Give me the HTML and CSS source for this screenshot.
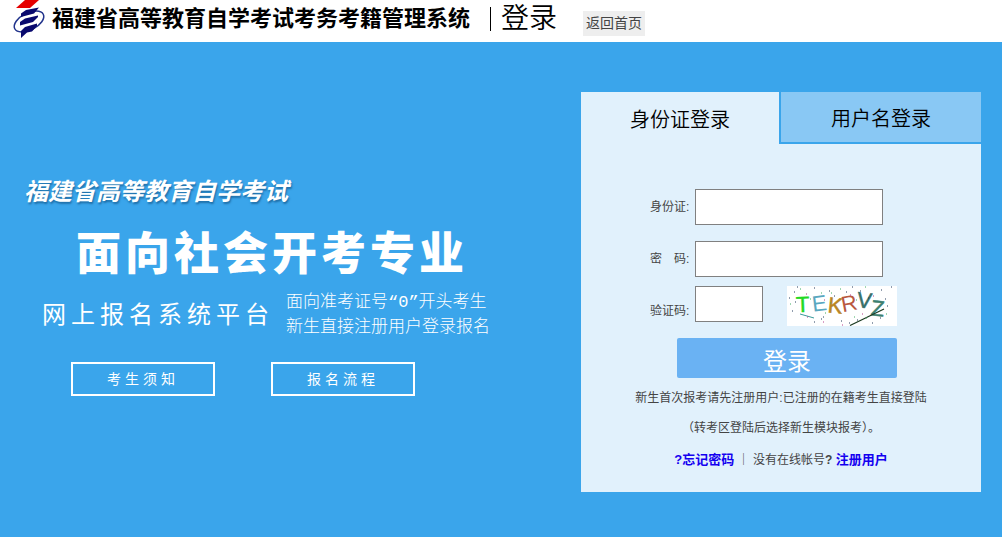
FILE: index.html
```html
<!DOCTYPE html>
<html lang="zh-CN">
<head>
    <meta charset="UTF-8">
    <meta name="viewport" content="width=device-width, initial-scale=1.0">
    <title>福建省高等教育自学考试考务考籍管理系统</title>
    <link rel="stylesheet" href="styles.css">
</head>
<body>
    <header class="header">
        <svg class="logo" width="34" height="38" viewBox="0 0 34 38" aria-hidden="true">
            <path d="M13 0H27L18 8H4Z" fill="#e60000"/>
            <ellipse cx="17" cy="21.500" rx="16" ry="8.500" transform="rotate(-27 17 21.500)" fill="none" stroke="#22348c" stroke-width="1.500"/>
            <path d="M9 17V13.500L14 10L27 7.500L22 13.500Z" fill="#0a0a6e"/>
            <path d="M8 25.500V22L13 18.500L26 15.500V17L21 22Z" fill="#0a0a6e"/>
            <path d="M9 38V31L13 27L25 23.500V26L20 31.500L15 32.500Z" fill="#0a0a6e"/>
        </svg>
        <h1 class="site-name">福建省高等教育自学考试考务考籍管理系统</h1>
        <span class="page-name">登录</span>
        <a class="home" href="#">返回首页</a>
    </header>

    <main class="main">
        <section class="intro">
            <p class="exam">福建省高等教育自学考试</p>
            <h2 class="title">面向社会开考专业</h2>
            <div class="platform">
                <p class="platform-name">网上报名系统平台</p>
                <p class="platform-desc">面向准考证号“0”开头考生<br>新生直接注册用户登录报名</p>
            </div>
            <div class="links">
                <a class="link" href="#">考生须知</a>
                <a class="link" href="#">报名流程</a>
            </div>
        </section>

        <section class="card">
            <div class="tabs">
                <button type="button" class="tab active">身份证登录</button>
                <button type="button" class="tab">用户名登录</button>
            </div>
            <form class="form">
                <div class="field">
                    <label for="idcard">身份证:</label>
                    <input type="text" id="idcard">
                </div>
                <div class="field">
                    <label for="password">密　码:</label>
                    <input type="password" id="password">
                </div>
                <div class="field code">
                    <label for="code">验证码:</label>
                    <input type="text" id="code">
                    <svg class="captcha" width="110" height="40" viewBox="0 0 110 40" role="img" aria-label="验证码">
                        <rect width="110" height="40" fill="#fff"/>
                        <g class="letters">
                            <text x="9" y="26" fill="#22d922" stroke="#22d922" stroke-width="0.500" transform="rotate(-2 16 19)">T</text>
                            <text x="25" y="25" fill="#5aa7bf" transform="rotate(-7 32 17)">E</text>
                            <text x="41" y="27" fill="#b98524" stroke="#b98524" stroke-width="0.500" transform="rotate(6 48 19)">K</text>
                            <text x="54" y="25" fill="#b9583f" transform="rotate(-11 61 17)">R</text>
                            <text x="70" y="22" fill="#36706a" stroke="#36706a" stroke-width="0.500" transform="rotate(7 77 15)">V</text>
                            <text x="84" y="30" fill="#3d8070" stroke="#3d8070" stroke-width="0.500" transform="rotate(6 91 23)">Z</text>
                        </g>
                        <path d="M13 28L27 32" stroke="#3a9a9a"/>
                        <path d="M63 39.500L97 23" stroke="#1c3a20" stroke-width="1.200"/>
                        <path d="M10 1h1M27 2h1M7 6h1M42 5h1M59 6h1M65 1h1M73 5h1M94 4h1M104 1h1M2 12h1M47 10h1M81 12h1M98 13h1M8 16h1M5 25h1M36 31h1M34 33h1M27 36h1M54 35h1M62 37h1M70 34h1M85 37h1M100 20h1M93 32h1" stroke="#223a5c"/>
                        <path d="M13 3h1M34 7h1M44 7h1M53 3h1M78 1h1M3 18h1M23 13h1M69 14h1M43 17h1M38 27h1M67 31h1M79 32h1M99 28h1" stroke="#3fae63"/>
                        <path d="M19 8h1M37 14h1M63 9h1M86 10h1M20 31h1M36 36h1M55 39h1M75 28h1" stroke="#b43c8c"/>
                    </svg>
                </div>
                <button type="submit" class="submit">登录</button>
            </form>
            <div class="notes">
                <p>新生首次报考请先注册用户:已注册的在籍考生直接登陆</p>
                <p>（转考区登陆后选择新生模块报考）。</p>
                <p class="account"><a href="#">?忘记密码</a> ｜ 没有在线帐号<b>?</b> <a href="#">注册用户</a></p>
            </div>
        </section>
    </main>
</body>
</html>
```
FILE: styles.css
```css
* {
    box-sizing: border-box;
}
body {
    margin: 0;
    min-height: 100vh;
    display: flex;
    flex-direction: column;
    background: #3aa5eb;
    font-family: "Liberation Sans", "Noto Sans CJK SC", sans-serif;
    font-size: 12px;
    color: #444;
}
h1, h2, p {
    margin: 0;
}
a {
    text-decoration: none;
}
button, input {
    font-family: inherit;
}

/* header */
.header {
    display: flex;
    align-items: center;
    height: 42px;
    padding: 0 12px 4px;
    background: #fff;
    color: #000;
}
.logo {
    flex: none;
    margin-right: 6px;
}
.site-name {
    font-size: 22px;
    line-height: 30px;
    font-weight: bold;
}
.page-name {
    margin-left: 20px;
    padding-left: 10px;
    font-size: 28px;
    line-height: 24px;
    font-weight: 350;
    border-left: 1px solid #000;
}
.home {
    margin: 8px 0 0 26px;
    padding: 0 3px;
    font-size: 14px;
    line-height: 25px;
    color: #444;
    background: #eee;
}

/* left side */
.main {
    flex: 1;
    display: flex;
    align-items: flex-start;
    justify-content: space-between;
    gap: 24px;
    padding: 50px 21px 45px 24px;
}
.intro {
    padding-top: 80px;
    color: #fff;
}
.exam {
    font-size: 24px;
    line-height: 40px;
    font-weight: bold;
    font-style: italic;
    text-shadow: 1px 2px 2px #1f6fa8;
}
.title {
    padding: 10px 0 2px 52px;
    font-size: 45px;
    line-height: 66px;
    font-weight: 900;
    letter-spacing: 4px;
}
.platform {
    display: flex;
    align-items: center;
    gap: 12px;
    padding-left: 18px;
}
.platform-name {
    font-size: 24px;
    line-height: 50px;
    letter-spacing: 5px;
}
.platform-desc {
    font-family: "Liberation Mono", "Noto Sans CJK SC", monospace;
    font-size: 17px;
    line-height: 25px;
    font-weight: 300;
}
.links {
    display: flex;
    gap: 56px;
    padding: 22px 0 0 47px;
}
.link {
    width: 144px;
    font-size: 14px;
    line-height: 30px;
    letter-spacing: 4px;
    text-align: center;
    color: #fff;
    border: 2px solid #fff;
}

/* login card */
.card {
    width: 400px;
    min-height: 400px;
    flex: none;
    background: #e1f1fc;
}
.tabs {
    display: flex;
}
.tab {
    flex: 1;
    height: 52px;
    padding: 0;
    border: 0 solid #3aa5eb;
    border-width: 0 0 2px 2px;
    background: #89c8f4;
    font-size: 20px;
    font-weight: 350;
    color: #000;
    cursor: pointer;
}
.tab.active {
    flex: 0 0 198px;
    border: none;
    background: none;
}
.form {
    display: flex;
    flex-direction: column;
    padding: 45px 84px 0 69px;
}
.field {
    display: flex;
    align-items: center;
    margin-bottom: 16px;
}
.field label {
    flex: 0 0 45px;
    line-height: 30px;
}
.field input {
    width: 188px;
    height: 36px;
    padding: 0 8px;
    border: 1px solid #808080;
    background: #fff;
    font-size: 14px;
}
.code {
    align-items: flex-end;
    margin: -7px 0 12px;
}
.code input {
    width: 68px;
    align-self: flex-start;
}
.captcha {
    margin-left: auto;
}
.letters {
    font-family: "Liberation Sans", sans-serif;
    font-size: 22px;
}
.submit {
    align-self: flex-end;
    width: 220px;
    height: 40px;
    padding: 2px 0 0;
    border: none;
    border-radius: 2px;
    background: #6ab2f3;
    color: #fff;
    font-size: 24px;
    cursor: pointer;
}
.notes {
    padding-top: 5px;
    line-height: 30px;
    text-align: center;
}
.account {
    padding-top: 2px;
}
.account a {
    font-size: 13px;
    font-weight: bold;
    color: #1400f0;
}
```
